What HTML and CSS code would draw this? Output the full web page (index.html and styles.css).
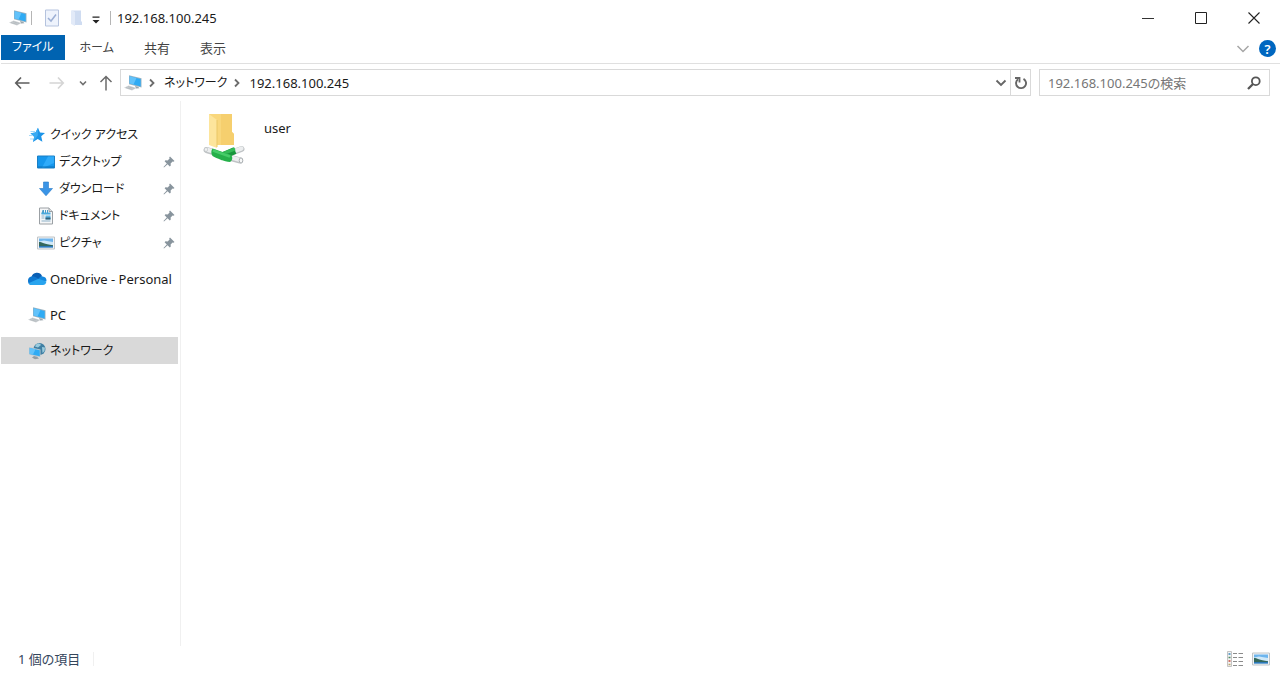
FILE: index.html
```html
<!DOCTYPE html>
<html lang="ja">
<head>
    <meta charset="UTF-8">
    <meta name="viewport" content="width=device-width, initial-scale=1.0">
    <title>192.168.100.245</title>
    <link rel="stylesheet" href="styles.css">
</head>
<body>
    <!-- Shared icons -->
    <svg class="symbols" aria-hidden="true">
        <symbol id="icon-pc" viewBox="0 0 18 16">
            <path d="M5 0.2L17.5 3.2V12.6L5 9.2Z" fill="#9db3c0"/>
            <path d="M5.7 1.2L16.7 3.9V11.4L5.7 8.5Z" fill="#2fabf4"/>
            <path d="M5.7 1.2L12.5 2.9L9.5 9.5L5.7 8.5Z" fill="#62c2fa"/>
            <path d="M11 11L14 11.8L15.5 13.2L12 13.4Z" fill="#9aa6ad"/>
            <path d="M0 12.8L4.5 10.6L12.5 12.9L8 15.6Z" fill="#cdd1d4"/>
            <path d="M2 12.6L8.4 14.4M4 11.7L10.4 13.5" stroke="#a5acb1" stroke-width="0.6"/>
        </symbol>
        <symbol id="icon-pin" viewBox="0 0 12 12">
            <path d="M7 0.5L11.5 5L10.5 5.8L9.6 5.4L7.6 7.6L7.8 9.5L6.8 10.4L4.6 8.2L1 11.5L0.5 11L3.8 7.4L1.6 5.2L2.5 4.2L4.6 4.4L6.6 2.4L6.2 1.4Z" fill="#88949d"/>
        </symbol>
        <symbol id="icon-picture" viewBox="0 0 18 14">
            <path d="M0.5 1H17.5V13H0.5Z" fill="#f2f4f5" stroke="#c0c4c7"/>
            <path d="M2 2.5H16V11.5H2Z" fill="#6db5ee"/>
            <path d="M2 5.5L7 4.5L16 6V9H2Z" fill="#cfe8f8"/>
            <path d="M2 6C5 6 7 8.2 16 9.2V10.5H2Z" fill="#34685c"/>
            <path d="M2 10H16V11.5H2Z" fill="#2d78b8"/>
        </symbol>
        <symbol id="icon-crumb" viewBox="0 0 8 10">
            <path d="M2 1.5L5.5 5L2 8.5" fill="none" stroke="#6c6c6c" stroke-width="1.8"/>
        </symbol>
    </svg>

    <div class="window">
        <!-- Title bar -->
        <header class="title-bar">
            <svg width="18" height="16"><use href="#icon-pc"/></svg>
            <span class="divider"></span>
            <button class="quick-button" aria-label="プロパティ">
                <svg width="16" height="18" viewBox="0 0 16 18">
                    <path d="M1.5 1H14.5V17H1.5Z" fill="#eef3fc" stroke="#b5c3de"/>
                    <path d="M4 9L7 12L12 5.5" fill="none" stroke="#9cafd4" stroke-width="1.5"/>
                </svg>
            </button>
            <button class="quick-button" aria-label="新しいフォルダー">
                <svg width="16" height="18" viewBox="0 0 16 18">
                    <path d="M3 1.5H13V12L14 13V16H6V3Z" fill="#cfdcf1"/>
                    <path d="M3 1.5L7 3V17L3 15Z" fill="#e2eaf8"/>
                </svg>
            </button>
            <button class="customize-button" aria-label="クイック アクセス ツール バーのカスタマイズ">
                <svg width="10" height="8" viewBox="0 0 10 8"><path d="M1.5 0.5H8.5V1.7H1.5ZM1.5 4H8.5L5 7.5Z" fill="#222"/></svg>
            </button>
            <span class="divider title-divider"></span>
            <h1>192.168.100.245</h1>
            <div class="window-buttons">
                <button aria-label="最小化"><svg width="14" height="14"><path d="M1 7.5H13" stroke="#333"/></svg></button>
                <button aria-label="最大化"><svg width="14" height="14"><path d="M1.5 1.5H12.5V12.5H1.5Z" fill="none" stroke="#222"/></svg></button>
                <button aria-label="閉じる"><svg width="14" height="14"><path d="M1.5 1.5L12.5 12.5M12.5 1.5L1.5 12.5" stroke="#222" stroke-width="1.1"/></svg></button>
            </div>
        </header>

        <!-- Ribbon tabs -->
        <nav class="tabs">
            <a class="tab tab-file kana" href="#">ファイル</a>
            <a class="tab kana" href="#">ホーム</a>
            <a class="tab" href="#">共有</a>
            <a class="tab" href="#">表示</a>
            <button class="ribbon-toggle" aria-label="リボンの展開"><svg width="14" height="10"><path d="M1.5 2L7 7.5L12.5 2" fill="none" stroke="#a6a6a6" stroke-width="1.5"/></svg></button>
            <button class="help-button" aria-label="ヘルプ">?</button>
        </nav>

        <!-- Address bar -->
        <div class="address-row">
            <button class="nav-button" aria-label="戻る"><svg width="16" height="14"><path d="M7 1.5L1.8 7L7 12.5M2 7H15.5" fill="none" stroke="#5e5e5e" stroke-width="1.7"/></svg></button>
            <button class="nav-button forward-button" aria-label="進む"><svg width="16" height="14"><path d="M9 1.5L14.2 7L9 12.5M14 7H0.5" fill="none" stroke="#d5d5d5" stroke-width="1.7"/></svg></button>
            <button class="nav-button recent-button" aria-label="最近表示した場所"><svg width="8" height="8"><path d="M1 2.5L4 5.5L7 2.5" fill="none" stroke="#707070" stroke-width="1.6"/></svg></button>
            <button class="nav-button up-button" aria-label="上へ"><svg width="14" height="16"><path d="M1.5 7L7 1.5L12.5 7M7 2V15.5" fill="none" stroke="#6b6b6b" stroke-width="1.5"/></svg></button>
            <div class="address-bar">
                <svg width="18" height="16"><use href="#icon-pc"/></svg>
                <svg class="crumb-arrow" width="8" height="10"><use href="#icon-crumb"/></svg>
                <a class="kana" href="#">ネットワーク</a>
                <svg class="crumb-arrow" width="8" height="10"><use href="#icon-crumb"/></svg>
                <a href="#">192.168.100.245</a>
                <button class="history-button" aria-label="以前の場所"><svg width="12" height="10"><path d="M1.5 2.5L6 7L10.5 2.5" fill="none" stroke="#666" stroke-width="1.9"/></svg></button>
                <button class="refresh-button" aria-label="最新の情報に更新"><svg width="14" height="14"><path d="M9.5 2.8A5 5 0 1 1 4 3.2" fill="none" stroke="#666" stroke-width="1.9"/><path d="M1 2H5.5V6.5" fill="none" stroke="#666" stroke-width="1.8"/></svg></button>
            </div>
            <form class="search">
                <input type="search" aria-label="検索" placeholder="192.168.100.245の検索">
                <button type="button" aria-label="検索開始"><svg width="14" height="14"><circle cx="8.8" cy="5.2" r="3.9" fill="none" stroke="#555" stroke-width="1.8"/><path d="M6 8L1 13" stroke="#555" stroke-width="2.3"/></svg></button>
            </form>
        </div>

        <main class="content">
            <!-- Navigation pane -->
            <nav class="sidebar">
                <div class="group">
                    <a class="item kana" href="#">
                        <svg width="18" height="16" viewBox="0 0 18 16">
                            <path d="M10 0.8L12 5.6L17 6L13.2 9.3L14.4 14.8L9.7 12L5 15L6.2 9.7L2.5 6.3L7.5 5.6Z" fill="#1c94e8"/>
                            <path d="M10 0.8L9.8 8.5L5 15L6.2 9.7L2.5 6.3L7.5 5.6Z" fill="#38aaf2"/>
                            <path d="M2.5 4.5H7M1 8.5H4.5M2 12H5" stroke="#a7d9f8"/>
                        </svg>
                        クイック アクセス
                    </a>
                    <a class="item sub kana" href="#">
                        <svg width="18" height="14" viewBox="0 0 18 14">
                            <path d="M0.5 1H17.5V13H0.5Z" fill="#1697ed" stroke="#1a7fc4"/>
                            <path d="M11 1.5H17V8L7 12.5H5Z" fill="#2fabfa"/>
                            <path d="M1 12H17" stroke="#0b73ba"/>
                        </svg>
                        デスクトップ
                        <svg width="12" height="12"><use href="#icon-pin"/></svg>
                    </a>
                    <a class="item sub kana" href="#">
                        <svg width="18" height="16" viewBox="0 0 18 16"><path d="M6.5 1H11.5V7.5H15.5L9 14.8L2.5 7.5H6.5Z" fill="#3a94e6" stroke="#277bc8" stroke-width="0.6"/></svg>
                        ダウンロード
                        <svg width="12" height="12"><use href="#icon-pin"/></svg>
                    </a>
                    <a class="item sub kana" href="#">
                        <svg width="18" height="18" viewBox="0 0 18 18">
                            <path d="M2.5 1H12L15.5 4.5V17H2.5Z" fill="#f6f7f8" stroke="#9ba0a4"/>
                            <path d="M12 1V4.5H15.5" fill="#dadde0" stroke="#9ba0a4"/>
                            <path d="M4.5 9H7.5M4.5 11H7.5M4.5 14H13.5" stroke="#8db1c8"/>
                            <path d="M5.5 3H7V7H4.5ZM8 3H9V7H8ZM10 3H11V7H10Z" fill="#4a9cc8"/>
                            <path d="M4.5 5.5H13.5V7.5H4.5Z" fill="#4aa9dc"/>
                            <path d="M8.5 8.5H13.5V12.5H8.5Z" fill="#61b6e4"/>
                            <path d="M8.5 10.5H13.5V12.5H8.5Z" fill="#30627c"/>
                        </svg>
                        ドキュメント
                        <svg width="12" height="12"><use href="#icon-pin"/></svg>
                    </a>
                    <a class="item sub kana" href="#">
                        <svg width="18" height="14"><use href="#icon-picture"/></svg>
                        ピクチャ
                        <svg width="12" height="12"><use href="#icon-pin"/></svg>
                    </a>
                </div>
                <a class="item" href="#">
                    <svg width="20" height="14" viewBox="0 0 20 14">
                        <path d="M4.5 5A5.6 5.6 0 0 1 15 4L12 9L4 8Z" fill="#0a5fb4"/>
                        <path d="M4.5 4.5C8 3.5 10 6.5 13 8L9 13H4.8A4.3 4.3 0 0 1 4.5 4.5Z" fill="#0f78d0"/>
                        <path d="M11.5 7C13 4 15 4 15.5 4.4A4.4 4.4 0 0 1 19.5 9L14 10Z" fill="#1488de"/>
                        <path d="M1.5 11.2L11.5 6.8L19.4 9.5C19.2 12 17.5 13 16 13H4.8C3.5 13 2.2 12.5 1.5 11.2Z" fill="#28a4ee"/>
                    </svg>
                    OneDrive - Personal
                </a>
                <a class="item" href="#">
                    <svg width="18" height="16"><use href="#icon-pc"/></svg>
                    PC
                </a>
                <a class="item selected kana" href="#">
                    <svg width="18" height="18" viewBox="0 0 18 18">
                        <circle cx="11.5" cy="7" r="6" fill="#3f7fa3"/>
                        <path d="M8 2.5C10 1 12 1.5 13 3L10 5.5L7 4.5ZM14 5L17 5.5L16.5 9L14.5 11Z" fill="#9acbdd"/>
                        <path d="M1 5L12.5 7.5V15.2L1 12.6Z" fill="#b9c7cf"/>
                        <path d="M1.7 6L11.8 8.2V14.2L1.7 11.9Z" fill="#2fabf4"/>
                        <path d="M1.7 6L7.5 7.2L5 12.6L1.7 11.9Z" fill="#62c2fa"/>
                        <path d="M6 14L9 14.7L11 16.5L7 17.2L4 15.5Z" fill="#929da4"/>
                    </svg>
                    ネットワーク
                </a>
            </nav>

            <!-- Files -->
            <section class="files">
                <a class="file" href="#">
                    <svg width="44" height="54" viewBox="0 0 44 54">
                        <path d="M6 2H29V20L31 22V33H10Z" fill="#f9d77c"/>
                        <path d="M18 2H29V20L31 22V33H18Z" fill="#f6cf6e"/>
                        <path d="M6 2L14 8V36L6 33Z" fill="#fde59c"/>
                        <path d="M14 8V35" stroke="#eac767"/>
                        <path d="M3.5 38L12 40.5M29 40.5L38.5 37M28 46L37 48.5" stroke="#bfc3c5" stroke-width="6" stroke-linecap="round"/>
                        <path d="M3.5 37.5L12 40M29 40L38.5 36.5M28 45.5L37 48" stroke="#eceeef" stroke-width="4" stroke-linecap="round"/>
                        <path d="M17 45L32 38.5" stroke="#17963b" stroke-width="7"/>
                        <path d="M19 42L32 37" stroke="#34bb57" stroke-width="3"/>
                        <path d="M9.5 36.5L27 42.5C30 44 30 48 27 50C21 49.5 14 46.5 9.5 44C7.8 41.5 8 38.5 9.5 36.5Z" fill="#25b04a"/>
                        <path d="M10 38.5L27 44.5" stroke="#45cc68" stroke-width="2.5"/>
                        <ellipse cx="38" cy="48.5" rx="1.8" ry="2.6" fill="#f7f8f8" stroke="#a9aeb1"/>
                        <ellipse cx="3" cy="37.5" rx="1.4" ry="2.2" fill="#f7f8f8" stroke="#c5c9cb"/>
                    </svg>
                    <span>user</span>
                </a>
            </section>
        </main>

        <!-- Status bar -->
        <footer class="status-bar">
            <span class="count">1 個の項目</span>
            <button class="view-button" aria-label="詳細">
                <svg width="18" height="18" viewBox="0 0 18 18">
                    <path d="M1.5 1.5H5.5V16.5H1.5Z" fill="#f3f3f3" stroke="#c4c4c4"/>
                    <path d="M7 3.5H11M12.5 3.5H17M7 7.5H11M12.5 7.5H17M7 11.5H11M12.5 11.5H17M7 15.5H11M12.5 15.5H17" stroke="#8b8b8b"/>
                    <path d="M2.5 4H4.5" stroke="#3786bd" stroke-width="1.5"/>
                    <path d="M2.5 7.5H4.5" stroke="#4d8b63" stroke-width="1.5"/>
                    <path d="M2.5 11H4.5" stroke="#c74939" stroke-width="1.5"/>
                    <path d="M2.5 14.5H4.5" stroke="#b9a76d" stroke-width="1.5"/>
                </svg>
            </button>
            <button class="view-button" aria-label="大アイコン"><svg width="18" height="14"><use href="#icon-picture"/></svg></button>
        </footer>
    </div>
</body>
</html>
```

FILE: styles.css
```css
* {
    box-sizing: border-box;
}

body {
    margin: 0;
    background-color: #fff;
    color: #1a1a1a;
    font-family: "Noto Sans", "Noto Sans CJK JP", sans-serif;
    font-size: 13px;
    line-height: 20px;
    font-feature-settings: "palt";
}

a {
    color: inherit;
    text-decoration: none;
}

button {
    display: flex;
    align-items: center;
    justify-content: center;
    padding: 0;
    border: none;
    background: none;
    font: inherit;
    color: inherit;
}

svg {
    display: block;
    flex: none;
}

.symbols {
    position: absolute;
    width: 0;
    height: 0;
}

.kana {
    font-size: 12px;
}

.window {
    display: flex;
    flex-direction: column;
    min-height: 100vh;
    padding-left: 1px;
}

/* Title bar */
.title-bar {
    display: flex;
    align-items: center;
    height: 35px;
    padding-left: 8px;
}

.divider {
    width: 1px;
    height: 14px;
    margin: 0 10px 0 4px;
    background-color: #b5b5b5;
}

.title-divider {
    margin: 0 6px 0 8px;
}

.quick-button {
    width: 20px;
    height: 24px;
    margin-right: 4px;
}

.customize-button {
    width: 12px;
    height: 24px;
    margin-top: 4px;
}

.title-bar h1 {
    margin: 0;
    font-size: 13px;
    font-weight: 400;
}

.window-buttons {
    display: flex;
    margin-left: auto;
}

.window-buttons button {
    width: 53px;
    height: 34px;
}

/* Ribbon tabs */
.tabs {
    display: flex;
    align-items: flex-start;
    height: 29px;
    padding-right: 4px;
    border-bottom: 1px solid #e0e0e0;
}

.tab {
    height: 25px;
    padding: 3px 15px;
    color: #444;
}

.tab-file {
    padding: 2px 11px;
    background-color: #0063b1;
    color: #fff;
}

.ribbon-toggle {
    width: 24px;
    height: 27px;
    margin-left: auto;
}

.help-button {
    width: 17px;
    height: 17px;
    margin: 5px 0 0 4px;
    border-radius: 50%;
    background-color: #0067c0;
    color: #fff;
    font-weight: 600;
}

/* Address bar */
.address-row {
    display: flex;
    align-items: center;
    height: 37px;
    padding: 0 10px 0 9px;
}

.nav-button {
    width: 24px;
    height: 27px;
    margin-right: 11px;
}

.forward-button {
    margin-right: 6px;
}

.recent-button {
    width: 16px;
    margin-right: 5px;
}

.up-button {
    width: 20px;
    margin-right: 4px;
}

.address-bar {
    display: flex;
    align-items: center;
    flex: 1;
    height: 27px;
    padding-left: 3px;
    border: 1px solid #d9d9d9;
}

.crumb-arrow {
    margin: 0 8px 0 6px;
}

.history-button {
    width: 18px;
    height: 25px;
    margin-left: auto;
}

.refresh-button {
    width: 20px;
    height: 25px;
    border-left: 1px solid #d9d9d9;
}

.search {
    display: flex;
    width: 231px;
    height: 27px;
    margin-left: 8px;
    border: 1px solid #d9d9d9;
}

.search input {
    flex: 1;
    min-width: 0;
    padding: 0 8px;
    border: none;
    outline: none;
    background: none;
    font: inherit;
    font-feature-settings: inherit;
}

.search input::placeholder {
    color: #767676;
}

.search button {
    width: 30px;
}

/* Content */
.content {
    display: flex;
    flex: 1;
}

.sidebar {
    display: flex;
    flex-direction: column;
    gap: 9px;
    width: 180px;
    padding: 20px 2px 0 0;
    border-right: 1px solid #f0f0f0;
}

.item {
    display: grid;
    grid-template-columns: 20px 1fr auto;
    align-items: center;
    justify-items: start;
    column-gap: 3px;
    height: 27px;
    padding-left: 26px;
    white-space: nowrap;
}

.item > svg:first-child {
    justify-self: center;
}

.sub {
    padding: 0 3px 0 35px;
}

.selected {
    background-color: #d9d9d9;
}

.files {
    flex: 1;
    padding: 11px 22px;
}

.file {
    display: inline-flex;
    gap: 17px;
}

.file span {
    padding-top: 6px;
}

/* Status bar */
.status-bar {
    display: flex;
    align-items: center;
    height: 28px;
    padding: 0 10px 2px 17px;
}

.count {
    margin-right: auto;
    padding-right: 13px;
    border-right: 1px solid #f0f0f0;
    line-height: 14px;
    color: #34465c;
}

.view-button {
    width: 18px;
    height: 24px;
    margin-left: 8px;
}
```
